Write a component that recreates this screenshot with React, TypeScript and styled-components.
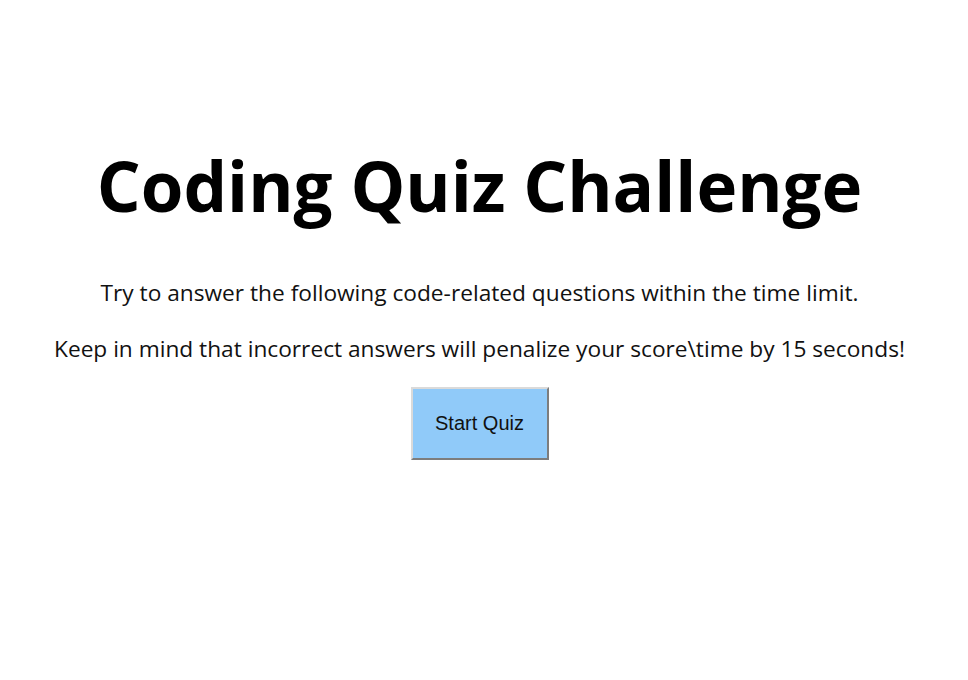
import React from "react";
import styled, { createGlobalStyle } from "styled-components";

const Global = createGlobalStyle`
  body {
    margin: 0;
    background: #ffffff;
    font-family: "Open Sans", "Noto Sans", sans-serif;
  }
`;

const Page = styled.main`
  display: flex;
  flex-direction: column;
  align-items: center;
  padding: 139px 9px 0 0;
  text-align: center;
`;

const Title = styled.h1`
  margin: 0 0 45px;
  font-size: 69px;
  font-weight: 700;
  line-height: 92px;
  color: #000;
  letter-spacing: 0;
`;

const Text = styled.p`
  margin: 0;
  font-size: 22.7px;
  line-height: 34px;
  color: #111;

  & + & {
    margin-top: 22px;
  }
`;

const StartButton = styled.button`
  margin-top: 21px;
  width: 138px;
  height: 73px;
  background: #90caf9;
  border: 2px solid;
  border-color: #dadada #7d7d7d #7d7d7d #dadada;
  font-family: "Liberation Sans", Arial, sans-serif;
  font-size: 20px;
  color: #111;
  cursor: pointer;
`;

export default function App() {
  return (
    <>
      <Global />
      <Page>
        <Title>Coding Quiz Challenge</Title>
        <Text>Try to answer the following code-related questions within the time limit.</Text>
        <Text>Keep in mind that incorrect answers will penalize your score\time by 15 seconds!</Text>
        <StartButton>Start Quiz</StartButton>
      </Page>
    </>
  );
}
